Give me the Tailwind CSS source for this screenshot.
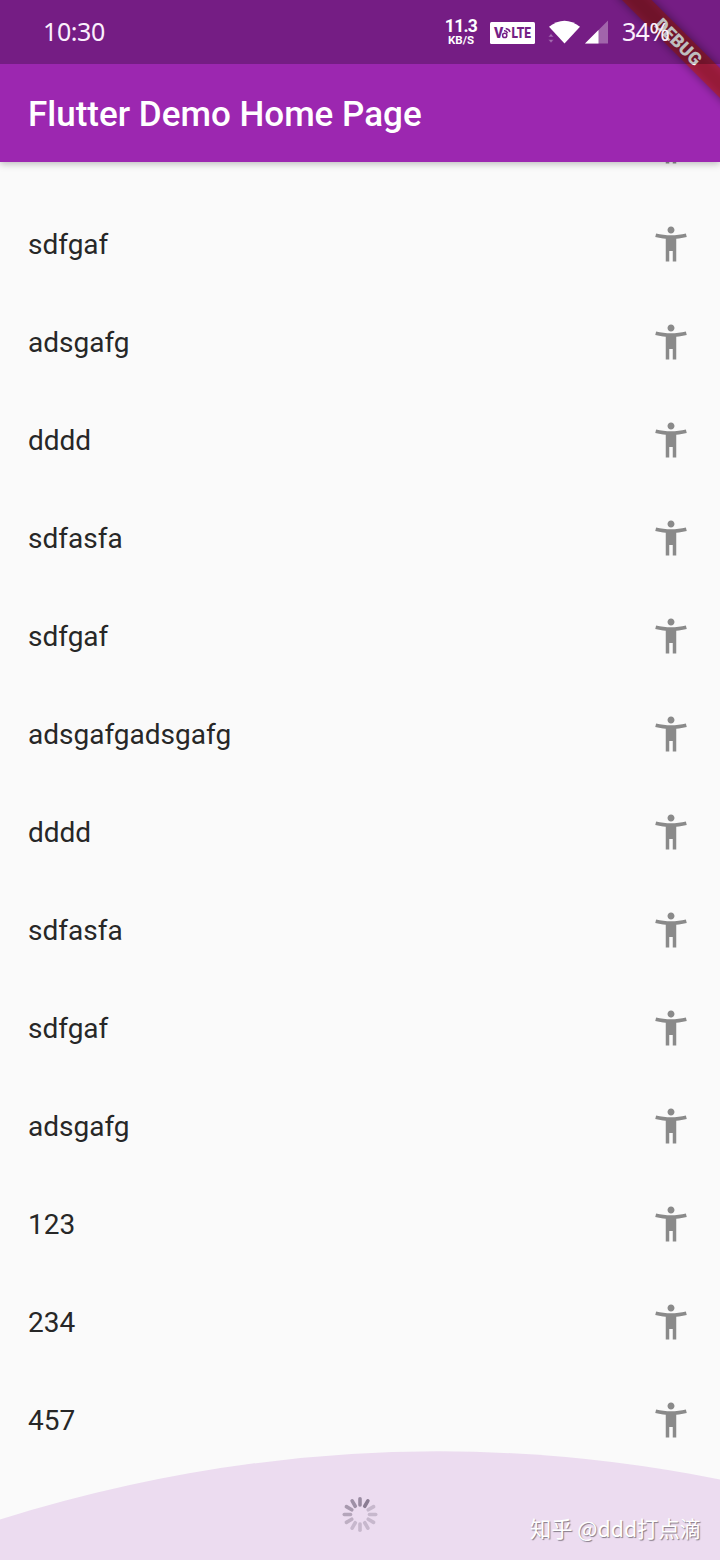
<!DOCTYPE html>
<html lang="en">
<head>
<meta charset="utf-8">
<title>Flutter Demo Home Page</title>
<script src="https://cdn.jsdelivr.net/npm/@tailwindcss/browser@4"></script>
</head>
<body class="bg-[#fafafa]">
<svg class="hidden">
  <symbol id="person" viewBox="0 0 24 24"><path fill="#8a8a8a" d="M20.5 6c-2.61.7-5.67 1-8.5 1s-5.89-.3-8.5-1L3 8c1.86.5 4 .83 6 1v13h2v-6h2v6h2V9c2-.17 4.14-.5 6-1l-.5-2zM12 6c1.1 0 2-.9 2-2s-.9-2-2-2-2 .9-2 2 .9 2 2 2z"/></symbol>
</svg>
<div class="relative flex h-[1560px] w-[720px] flex-col overflow-hidden bg-[#fafafa] font-['Roboto',sans-serif]">
  <header class="relative z-10 flex h-[162px] shrink-0 flex-col bg-[#9c27b0] shadow-[0_2px_7px_rgba(0,0,0,0.25)]">
    <!-- debug ribbon -->
    <svg class="absolute right-0 top-0 h-[162px] w-[120px]" viewBox="0 0 120 162">
      <defs><filter id="soft" x="-20%" y="-100%" width="140%" height="300%"><feGaussianBlur stdDeviation="5"/></filter></defs>
      <g transform="translate(121 0) rotate(45)">
        <rect x="-80" y="49" width="160" height="21" fill="#000" fill-opacity=".42" filter="url(#soft)"/>
        <rect x="-80" y="49" width="160" height="21" fill="#b71c1c" fill-opacity=".63"/>
        <text x="-.5" y="66" text-anchor="middle" font-family="Roboto" font-weight="900" font-size="18" fill="#fff" textLength="58">DEBUG</text>
      </g>
    </svg>
    <div class="relative flex h-16 items-center bg-black/25 pl-[43px] font-['Noto_Sans',sans-serif] text-[25px] text-[#fbeffd]">
      <span class="w-[402px] tracking-[-0.4px]">10:30</span>
      <div class="flex w-[32px] flex-col items-center whitespace-nowrap font-['Roboto',sans-serif] font-bold text-white">
        <span class="text-[17.5px] leading-[15px] tracking-[-0.7px]">11.3</span>
        <span class="text-[11.5px] leading-[12px]">KB/S</span>
      </div>
      <svg class="ml-[13px] mt-[2px] h-[22px] w-[45px]" viewBox="0 0 45 22">
        <rect width="45" height="22" rx="1.5" fill="#fff"/>
        <g font-family="Roboto" font-weight="900" fill="#751f84">
          <text x="4" y="16" font-size="14">V</text>
          <text x="21.5" y="16" font-size="14" textLength="19.5" lengthAdjust="spacingAndGlyphs">LTE</text>
        </g>
        <g fill="none" stroke="#751f84" stroke-width="1.5"><circle cx="14.7" cy="13.4" r="2.1"/><path d="M14 8.8q2.500-.3 3.600 2.400M15.700 6.400q3.300.3 4.400 3.600"/></g>
      </svg>
      <svg class="ml-[13px] h-[26px] w-[33px]" viewBox="0 0 33 26">
        <path fill="#fff" d="M1 7.800Q16.500-4.500 32 7.800L16.500 24.500z"/>
        <path fill="#a56fb1" stroke="#751f84" stroke-width=".6" d="M.2 18L3 14.500l2.800 3.500zM.2 20.500L3 24 5.800 20.500z"/>
      </svg>
      <svg class="ml-[4px] h-[24px] w-[24px]" viewBox="0 0 24 24">
        <path fill="#fff" fill-opacity=".32" d="M0 23.500L23 .5v23z"/><path fill="#fff" d="M0 23.500L13.500 10v13.500z"/>
      </svg>
      <span class="ml-[13px] tracking-[-0.7px]">34%</span>
    </div>
    <h1 class="flex flex-1 items-center pl-7 pt-[4px] text-[35px] font-medium text-white"><span>Flutter Demo Home Page</span></h1>
  </header>

  <main class="-mt-[65px] flex flex-col text-[28px] text-[#272727] *:flex *:h-[98px] *:shrink-0 *:items-center *:justify-between *:px-7 [&_span]:pt-[2px] [&_svg]:size-[42px]">
    <div><span></span><svg><use href="#person"/></svg></div>
    <div><span>sdfgaf</span><svg><use href="#person"/></svg></div>
    <div><span>adsgafg</span><svg><use href="#person"/></svg></div>
    <div><span>dddd</span><svg><use href="#person"/></svg></div>
    <div><span>sdfasfa</span><svg><use href="#person"/></svg></div>
    <div><span>sdfgaf</span><svg><use href="#person"/></svg></div>
    <div><span>adsgafgadsgafg</span><svg><use href="#person"/></svg></div>
    <div><span>dddd</span><svg><use href="#person"/></svg></div>
    <div><span>sdfasfa</span><svg><use href="#person"/></svg></div>
    <div><span>sdfgaf</span><svg><use href="#person"/></svg></div>
    <div><span>adsgafg</span><svg><use href="#person"/></svg></div>
    <div><span>123</span><svg><use href="#person"/></svg></div>
    <div><span>234</span><svg><use href="#person"/></svg></div>
    <div><span>457</span><svg><use href="#person"/></svg></div>
  </main>

  <!-- loading wave over the end of the list -->
  <footer class="absolute bottom-0 left-0 h-[110px] w-full">
    <svg class="h-[110px] w-[720px]" viewBox="0 0 720 110">
      <path fill="#ecdcf0" d="M0 69.500Q360-42.500 720 29.500V110H0z"/>
      <g transform="translate(360 64.500)" stroke="#8b7d93" stroke-width="3.600" stroke-linecap="round">
        <path d="M0-9.500V-15.700" stroke-opacity=".85"/>
        <path d="M0-9.500V-15.700" transform="rotate(30)" stroke-opacity="1"/>
        <path d="M0-9.500V-15.700" transform="rotate(60)" stroke-opacity=".38"/>
        <path d="M0-9.500V-15.700" transform="rotate(90)" stroke-opacity=".38"/>
        <path d="M0-9.500V-15.700" transform="rotate(120)" stroke-opacity=".38"/>
        <path d="M0-9.500V-15.700" transform="rotate(150)" stroke-opacity=".38"/>
        <path d="M0-9.500V-15.700" transform="rotate(180)" stroke-opacity=".38"/>
        <path d="M0-9.500V-15.700" transform="rotate(210)" stroke-opacity=".38"/>
        <path d="M0-9.500V-15.700" transform="rotate(240)" stroke-opacity=".48"/>
        <path d="M0-9.500V-15.700" transform="rotate(270)" stroke-opacity=".58"/>
        <path d="M0-9.500V-15.700" transform="rotate(300)" stroke-opacity=".7"/>
        <path d="M0-9.500V-15.700" transform="rotate(330)" stroke-opacity=".8"/>
      </g>
    </svg>
    <span class="absolute bottom-[17px] right-[19px] whitespace-nowrap font-['Noto_Sans_CJK_SC',sans-serif] text-[21.300px] leading-[30px] text-white [text-shadow:1px_1px_1px_rgba(0,0,0,0.45)]">知乎 @ddd打点滴</span>
  </footer>
</div>
</body>
</html>
